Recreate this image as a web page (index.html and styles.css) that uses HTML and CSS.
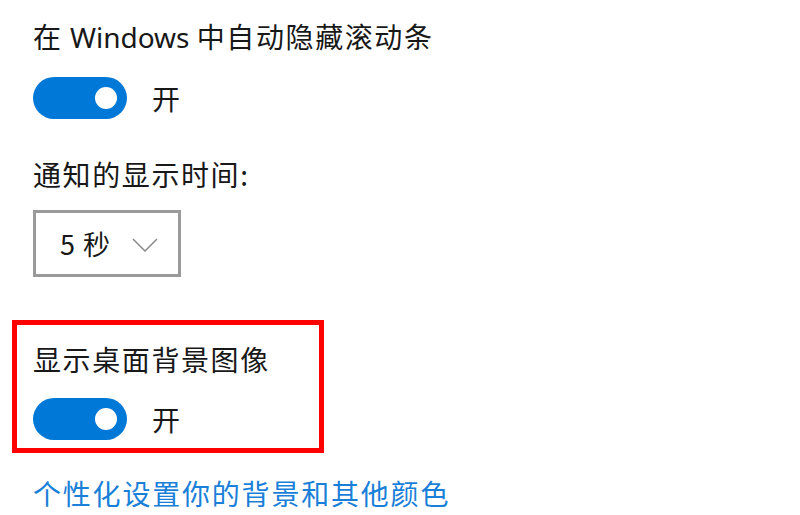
FILE: index.html
```html
<!DOCTYPE html>
<html lang="zh-CN">
<head>
<meta charset="utf-8">
<title>设置</title>
<link rel="stylesheet" href="styles.css">
</head>
<body>
<main class="page">
  <div class="setting-title first">在<span class="latin"> Windows </span>中自动隐藏滚动条</div>
  <div class="toggle-row">
    <span class="toggle"><span class="knob"></span></span>
    <span class="toggle-label">开</span>
  </div>

  <div class="setting-title second">通知的显示时间:</div>
  <div class="dropdown">
    <span class="dropdown-value">5 秒</span>
    <svg class="chevron" width="26" height="14" viewBox="0 0 26 14" aria-hidden="true">
      <polyline points="1,1 13,13 25,1" fill="none" stroke="#8a8a8a" stroke-width="1.5"/>
    </svg>
  </div>

  <section class="highlight">
    <div class="setting-title">显示桌面背景图像</div>
    <div class="toggle-row inner">
      <span class="toggle"><span class="knob"></span></span>
      <span class="toggle-label">开</span>
    </div>
  </section>

  <a class="link" href="#">个性化设置你的背景和其他颜色</a>
</main>
</body>
</html>
```

FILE: styles.css
```css
html, body {
  margin: 0;
  padding: 0;
  background: #ffffff;
}

.page {
  display: flex;
  flex-direction: column;
  align-items: flex-start;
  padding: 20px 0 0 33px;
  font-family: "Noto Sans", "Noto Sans CJK SC", sans-serif;
  color: #181818;
}

.setting-title {
  font-family: "Noto Sans CJK SC", sans-serif;
  font-size: 28px;
  line-height: 32px;
  height: 32px;
  letter-spacing: 1.6px;
  white-space: nowrap;
}

.setting-title .latin {
  font-family: "Noto Sans", sans-serif;
  letter-spacing: 0;
}

.setting-title.second {
  margin-top: 39px;
}

.toggle-row {
  display: flex;
  align-items: center;
  margin-top: 25px;
  height: 42px;
}

.toggle-row.inner {
  margin-top: 23px;
}

.toggle {
  display: flex;
  align-items: center;
  justify-content: flex-end;
  box-sizing: border-box;
  width: 94px;
  height: 42px;
  padding-right: 10px;
  border-radius: 21px;
  background: #0078d7;
}

.knob {
  width: 22px;
  height: 22px;
  border-radius: 50%;
  background: #ffffff;
}

.toggle-label {
  margin-left: 25px;
  font-family: "Noto Sans CJK SC", sans-serif;
  font-size: 28px;
  line-height: 32px;
}

.dropdown {
  display: flex;
  align-items: center;
  box-sizing: border-box;
  width: 148px;
  height: 67px;
  margin-top: 20px;
  padding-left: 24px;
  border: 3px solid #9a9a9a;
  background: #ffffff;
}

.dropdown-value {
  font-family: "Noto Sans CJK SC", sans-serif;
  font-size: 27px;
  line-height: 32px;
  letter-spacing: 1px;
}

.chevron {
  margin-left: 21px;
  margin-top: 2px;
}

.highlight {
  box-sizing: border-box;
  width: 312px;
  height: 133px;
  margin-top: 43px;
  margin-left: -21px;
  padding: 18px 0 0 16px;
  border: 5px solid #ff0000;
}

.link {
  margin-top: 24px;
  font-family: "Noto Sans CJK SC", sans-serif;
  font-size: 28px;
  line-height: 32px;
  letter-spacing: 1.8px;
  color: #1a7fd8;
  text-decoration: none;
  white-space: nowrap;
}
```
